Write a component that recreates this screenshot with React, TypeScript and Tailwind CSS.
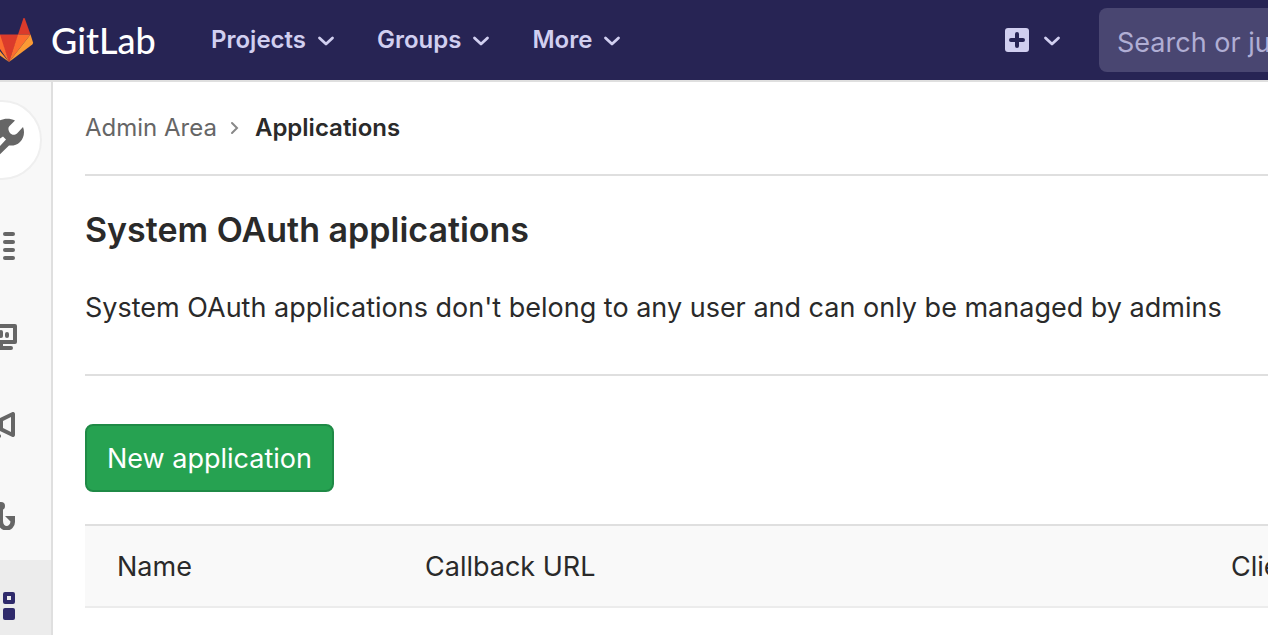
import React from 'react';

type MenuProps = { label: string };

function Chevron() {
  return (
    <svg width="18" height="12" viewBox="0 0 18 12" fill="none" aria-hidden="true" className="shrink-0">
      <path d="M2.500 4 9 10 15.500 4" stroke="currentColor" strokeWidth="2.800" strokeLinecap="round" strokeLinejoin="round" />
    </svg>
  );
}

function Menu({ label }: MenuProps) {
  return (
    <button type="button" className="flex items-center gap-[11px] text-[24px] leading-8 font-semibold">
      {label}
      <Chevron />
    </button>
  );
}

function Logo() {
  return (
    <svg width="34" height="46" viewBox="0 0 34 46" aria-hidden="true" className="shrink-0">
      <path d="M18 17.500 23.300 1.500a.8.8 0 0 1 1.500 0L30.500 17.500Z" fill="#db3b2b" />
      <path d="M9 45-1 17.500H18.500Z" fill="#db3b2b" />
      <path d="M9 45 18 17.500H30.500Z" fill="#fc6d2f" />
      <path d="M9 45-10 17.500H0Z" fill="#fc6d2f" />
      <path d="M9 45 30.500 17.500 33 25.500a2 2 0 0 1-.7 2Z" fill="#fb9a34" />
      <path d="M9 45-12 30V20Z" fill="#fb9a34" />
    </svg>
  );
}

function Sidebar() {
  const link = 'flex h-[90px] items-center pt-[2px]';
  return (
    <nav aria-label="Admin Area" className="w-[53px] shrink-0 overflow-hidden border-r-2 border-[#dfdfdf] bg-[#f8f8f8] text-[#666]">
      <a href="#admin" aria-label="Admin Area" className="flex h-[118px] items-center">
        <svg width="44" height="84" viewBox="0 99 44 84" aria-hidden="true">
          <circle cx="2" cy="140" r="39" fill="#fff" stroke="#efefef" strokeWidth="2" />
          <path fill="currentColor" fillRule="evenodd" d="M-2 121.500C3 118 10 118 15 120.500L9.500 126C7.500 128 8.500 131 10 133C12 135.500 15 135 17 133.500L23 127C25 132 24 138 20 142C17 145 13 146 9 145.500L-4 158V140Z M-1 139 3 136.500 6 139.500-1 147Z" />
        </svg>
      </a>
      <a href="#overview" aria-label="Overview" className={link}>
        <svg width="16" height="28" viewBox="0 0 16 28" fill="currentColor" aria-hidden="true">
          <rect x="3" width="12" height="4" rx="2" />
          <rect x="3" y="8" width="12" height="4" rx="2" />
          <rect x="3" y="16" width="12" height="4" rx="2" />
          <rect x="3" y="24" width="12" height="4" rx="2" />
        </svg>
      </a>
      <a href="#monitoring" aria-label="Monitoring" className={link}>
        <svg width="18" height="28" viewBox="0 -2 18 28" aria-hidden="true">
          <path d="M-4 2H15V18H-4M1 18V22M-4 24H11" fill="none" stroke="currentColor" strokeWidth="4" strokeLinecap="round" strokeLinejoin="round" />
          <rect x="-1" y="6" width="4" height="8" rx="2" fill="currentColor" />
          <rect x="5" y="8" width="4" height="6" rx="2" fill="currentColor" />
        </svg>
      </a>
      <a href="#messages" aria-label="Messages" className={link}>
        <svg width="16" height="28" viewBox="0 0 16 28" fill="currentColor" aria-hidden="true">
          <path fillRule="evenodd" d="M-1 6.500 12 .2a2 2 0 0 1 3 1.800V23a2 2 0 0 1-3 1.800L-1 18.500ZM3 9V16L11 20V5Z" />
          <circle cx="-1" cy="24" r="2" />
        </svg>
      </a>
      <a href="#hooks" aria-label="System Hooks" className={link}>
        <svg width="16" height="28" viewBox="0 0 16 28" fill="currentColor" aria-hidden="true">
          <circle cx="1" cy="4" r="4" />
          <path d="M-2 6H3V19C3 25.500 10 25.500 10.500 19.500L5 14H15V20A8 8 0 0 1-2 20Z" />
        </svg>
      </a>
      <a href="#applications" aria-label="Applications" className="flex h-[90px] items-center bg-[#ececec] pt-[2px] text-[#2f2a6b]">
        <svg width="16" height="28" viewBox="0 0 16 28" aria-hidden="true">
          <path fillRule="evenodd" fill="currentColor" d="M5 0h8a2 2 0 0 1 2 2v8a2 2 0 0 1-2 2H5a2 2 0 0 1-2-2V2a2 2 0 0 1 2-2ZM7 4v4h4V4Z" />
          <rect x="3" y="16" width="12" height="12" rx="2" fill="currentColor" />
        </svg>
      </a>
    </nav>
  );
}

export default function App() {
  return (
    <div className="flex h-screen flex-col overflow-hidden bg-white font-['Inter',sans-serif] text-[#2a2a2a]">
      <header className="flex h-[82px] shrink-0 items-center border-b-2 border-[#dfdfdf] bg-[#272454] text-[#d1cff0]">
        <a href="#home" className="flex w-[157px] shrink-0 items-center gap-[17px] text-white">
          <Logo />
          <span className="font-['Lato',sans-serif] text-[36px] leading-10 font-medium">GitLab</span>
        </a>
        <nav aria-label="Main" className="ml-[54px] flex items-center gap-[42px]">
          <Menu label="Projects" />
          <Menu label="Groups" />
          <Menu label="More" />
        </nav>
        <button type="button" aria-label="New" className="ml-auto flex items-center gap-[14px]">
          <svg width="24" height="24" viewBox="0 0 24 24" aria-hidden="true">
            <rect width="24" height="24" rx="3" fill="currentColor" />
            <path d="M12 6v12M6 12h12" stroke="#272454" strokeWidth="4" strokeLinecap="round" />
          </svg>
          <Chevron />
        </button>
        <div className="ml-[38px] w-[169px] shrink-0 overflow-hidden">
          <input type="search" aria-label="Search" placeholder="Search or jump to…" className="block h-16 w-[480px] rounded-lg bg-[#494671] px-[18px] pt-1 text-[27px] placeholder:text-[#b0aed4]" />
        </div>
      </header>
      <div className="flex min-h-0 grow">
        <Sidebar />
        <main className="min-w-0 grow overflow-hidden pl-8">
          <nav aria-label="Breadcrumb" className="flex h-[94px] items-center gap-[13px] border-b-2 border-[#dfdfdf] text-[24px] leading-8">
            <a href="#admin" className="text-[#666]">Admin Area</a>
            <svg width="12" height="14" viewBox="0 0 12 14" fill="none" aria-hidden="true">
              <path d="M2 2 7 7 2 12" stroke="#888" strokeWidth="2" strokeLinecap="round" />
            </svg>
            <a href="#applications" className="font-semibold">Applications</a>
          </nav>
          <h1 className="mt-8 text-[34px] leading-[44px] font-semibold">System OAuth applications</h1>
          <p className="mt-9 text-[27px] leading-10 whitespace-nowrap">System OAuth applications don't belong to any user and can only be managed by admins</p>
          <hr className="mt-[46px] border-t-2 border-[#dfdfdf]" />
          <button type="button" className="mt-12 flex h-[68px] items-center rounded-lg border-2 border-[#1f8a46] bg-[#26a251] px-5 pt-[2px] text-[27px] text-white">New application</button>
          <table className="mt-8 w-[1600px] table-fixed border-collapse text-left text-[27px] leading-10">
            <thead>
              <tr className="h-[82px] border-t-2 border-b-2 border-t-[#dfdfdf] border-b-[#ececec] bg-[#f9f9f9]">
                <th scope="col" className="w-[308px] px-8 pt-[2px] font-normal">Name</th>
                <th scope="col" className="w-[806px] px-8 pt-[2px] font-normal">Callback URL</th>
                <th scope="col" className="px-8 pt-[2px] font-normal">Clients</th>
              </tr>
            </thead>
          </table>
        </main>
      </div>
    </div>
  );
}
